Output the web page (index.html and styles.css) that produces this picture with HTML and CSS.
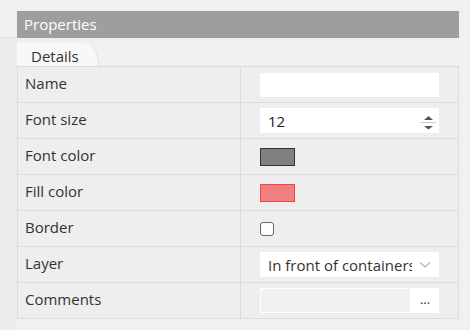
FILE: index.html
```html
<!DOCTYPE html>
<html lang="en">
<head>
	<meta charset="UTF-8">
	<title>Properties</title>
	<link rel="stylesheet" href="styles.css">
</head>
<body>
	<div class="side"></div>
	<div class="panel">
		<div class="head">Properties</div>
		<div class="tabs">
			<div class="tab">Details</div>
		</div>
		<div class="grid">
			<div class="row">
				<div class="label">Name</div>
				<div class="value"><input class="text" type="text"></div>
			</div>
			<div class="row">
				<div class="label">Font size</div>
				<div class="value">
					<div class="spin">
						<span>12</span>
						<svg width="16" height="18" viewBox="0 0 16 18">
							<path d="M4 8 L8.5 4 L13 8 Z" fill="#555"/>
							<line x1="0" y1="10.5" x2="19" y2="10.5" stroke="#ccc"/>
							<path d="M4 14 L13 14 L8.5 17.5 Z" fill="#555"/>
						</svg>
					</div>
				</div>
			</div>
			<div class="row">
				<div class="label">Font color</div>
				<div class="value"><span class="swatch gray"></span></div>
			</div>
			<div class="row">
				<div class="label">Fill color</div>
				<div class="value"><span class="swatch red"></span></div>
			</div>
			<div class="row">
				<div class="label">Border</div>
				<div class="value"><span class="check"></span></div>
			</div>
			<div class="row">
				<div class="label">Layer</div>
				<div class="value">
					<div class="select">
						<span class="opt">In front of containers</span>
						<svg width="12" height="8" viewBox="0 0 12 8">
							<path d="M1 1.5 L6 6 L11 1.5" fill="none" stroke="#888" stroke-width="1"/>
						</svg>
					</div>
				</div>
			</div>
			<div class="row">
				<div class="label">Comments</div>
				<div class="value">
					<div class="comment">
						<span class="field"></span>
						<span class="more">...</span>
					</div>
				</div>
			</div>
		</div>
	</div>
</body>
</html>
```

FILE: styles.css
```css
*{
	margin: 0;
	padding: 0;
	box-sizing: border-box;
}
body{
	background: #f0f0f0;
	font-family: "Open Sans", "Liberation Sans", sans-serif;
	color: #333;
	display: flex;
	height: 330px;
	overflow: hidden;
}
.side{
	width: 17px;
	margin-top: 37px;
	background: #ececec;
	border-top: 1px solid #e0e0e0;
}
.panel{
	width: 442px;
	margin-top: 11px;
}
.head{
	height: 27px;
	line-height: 27px;
	padding-left: 7px;
	background: #9e9e9e;
	color: #fff;
	font-size: 15px;
}
.tabs{
	display: flex;
	margin-top: 5px;
}
.tab{
	width: 82px;
	height: 23px;
	line-height: 27px;
	padding-left: 14px;
	background: #f8f8f8;
	border-right: 1px solid #ddd;
	border-top-right-radius: 14px 23px;
	font-size: 15px;
}
.grid{
	border: 1px solid #dcdcdc;
	border-bottom: none;
	background: #eeeeee;
}
.row{
	display: grid;
	grid-template-columns: 223px 1fr;
	height: 36px;
	border-bottom: 1px solid #dcdcdc;
}
.label{
	border-right: 1px solid #dcdcdc;
	padding-left: 7px;
	font-size: 15px;
	line-height: 32px;
}
.value{
	padding-left: 19px;
	display: flex;
	align-items: center;
}
.text{
	width: 179px;
	height: 24px;
	border: none;
	background: #fff;
	outline: none;
}
.spin{
	width: 179px;
	height: 25px;
	background: #fff;
	display: flex;
	align-items: center;
	justify-content: space-between;
	padding: 0 3px 0 8px;
	font-size: 15px;
	color: #222;
}
.swatch{
	display: block;
	width: 35px;
	height: 18px;
	border: 1px solid #333;
}
.gray{
	background: #808080;
}
.red{
	background: #f08080;
	border-color: #f0483e;
}
.check{
	display: block;
	width: 14px;
	height: 14px;
	border: 1px solid #666;
	border-radius: 3px;
	background: #fff;
}
.select{
	width: 179px;
	height: 25px;
	background: #fff;
	display: flex;
	align-items: center;
	padding: 0 8px 0 8px;
	font-size: 15px;
	color: #333;
}
.opt{
	width: 145px;
	overflow: hidden;
	white-space: nowrap;
	margin-right: 7px;
}
.comment{
	width: 179px;
	height: 25px;
	display: flex;
	background: #fff;
}
.field{
	width: 151px;
	background: #f1f1f1;
	border: 1px solid #fff;
}
.more{
	flex: 1;
	text-align: center;
	font-size: 13px;
	line-height: 22px;
}
```
